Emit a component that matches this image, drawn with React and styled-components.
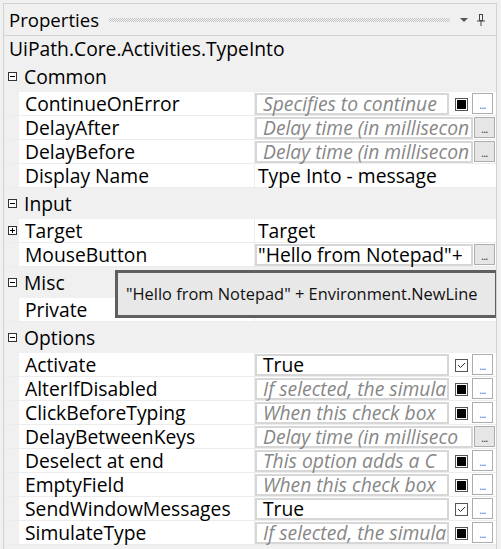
import styled, { createGlobalStyle } from "styled-components";

const GlobalStyle = createGlobalStyle`
  html, body {
    margin: 0;
    padding: 0;
    background: #f0f0f0;
  }
  body {
    font-family: "Open Sans", "Noto Sans", sans-serif;
    color: #000;
  }
`;

const groups = [
  {
    title: "Common",
    rows: [
      { name: "ContinueOnError", hint: "Specifies to continue", check: "on", btn: "blue" },
      { name: "DelayAfter", hint: "Delay time (in millisecon", btn: "gray" },
      { name: "DelayBefore", hint: "Delay time (in millisecon", btn: "gray" },
      { name: "Display Name", text: "Type Into - message" },
    ],
  },
  {
    title: "Input",
    rows: [
      { name: "Target", text: "Target", expand: true },
      { name: "MouseButton", value: '"Hello from Notepad"+', btn: "gray", tight: true },
    ],
  },
  {
    title: "Misc",
    rows: [{ name: "Private" }],
  },
  {
    title: "Options",
    rows: [
      { name: "Activate", value: "True", check: "tick", btn: "blue" },
      { name: "AlterIfDisabled", hint: "If selected, the simula", check: "on", btn: "blue" },
      { name: "ClickBeforeTyping", hint: "When this check box", check: "on", btn: "blue" },
      { name: "DelayBetweenKeys", hint: "Delay time (in milliseco", btn: "gray" },
      { name: "Deselect at end", hint: "This option adds a C", check: "on", btn: "blue" },
      { name: "EmptyField", hint: "When this check box", check: "on", btn: "blue" },
      { name: "SendWindowMessages", value: "True", check: "tick", btn: "blue" },
      { name: "SimulateType", hint: "If selected, the simula", check: "on", btn: "blue" },
    ],
  },
];

function Expander({ open }) {
  return (
    <svg width="9" height="9" viewBox="0 0 9 9">
      <rect x="0.5" y="0.5" width="8" height="8" fill="#fff" stroke="#333" />
      <line x1="2" y1="4.5" x2="7" y2="4.5" stroke="#000" />
      {!open && <line x1="4.5" y1="2" x2="4.5" y2="7" stroke="#000" />}
    </svg>
  );
}

function Row({ row }) {
  const hasCheck = !!row.check;
  return (
    <RowLine>
      <Gutter>{row.expand && <Expander open={false} />}</Gutter>
      <NameCell>{row.name}</NameCell>
      <ValueCell>
        {row.text && <PlainValue>{row.text}</PlainValue>}
        {(row.hint || row.value) && (
          <TextBox $wide={!hasCheck} $tight={row.tight}>
            {row.hint ? <Hint>{row.hint}</Hint> : row.value}
          </TextBox>
        )}
        {row.check === "on" && (
          <CheckBox>
            <Fill />
          </CheckBox>
        )}
        {row.check === "tick" && (
          <CheckBox>
            <svg width="9" height="7" viewBox="0 0 9 7">
              <polyline points="1,3 3.5,5.5 8,1" fill="none" stroke="#333" strokeWidth="1" />
            </svg>
          </CheckBox>
        )}
        {row.btn && (
          <DotsButton $gray={row.btn === "gray"} $afterCheck={hasCheck}>
            ...
          </DotsButton>
        )}
      </ValueCell>
    </RowLine>
  );
}

export default function App() {
  return (
    <>
      <GlobalStyle />
      <Panel>
        <TitleBar>
          <Title>Properties</Title>
          <Grip />
          <svg width="8" height="4" viewBox="0 0 8 4" style={{ marginRight: 9 }}>
            <polygon points="0,0 8,0 4,4" fill="#555" />
          </svg>
          <svg width="8" height="12" viewBox="0 0 8 12">
            <rect x="2.5" y="0.5" width="3" height="6" fill="none" stroke="#444" />
            <line x1="0" y1="7" x2="8" y2="7" stroke="#444" />
            <line x1="4" y1="7" x2="4" y2="12" stroke="#444" />
          </svg>
        </TitleBar>
        <TypeName>UiPath.Core.Activities.TypeInto</TypeName>
        {groups.map((g) => (
          <section key={g.title}>
            <GroupHeader>
              <Expander open />
              <GroupTitle>{g.title}</GroupTitle>
            </GroupHeader>
            {g.rows.map((r) => (
              <Row key={r.name} row={r} />
            ))}
          </section>
        ))}
        <Tooltip>"Hello from Notepad" + Environment.NewLine</Tooltip>
      </Panel>
    </>
  );
}

const Panel = styled.div`
  position: relative;
  margin: 3px 0 0 3px;
  width: 494px;
  height: 546px;
  box-sizing: border-box;
  border-left: 1px solid #d2d2d2;
  border-top: 1px solid #d2d2d2;
  border-right: 1px solid #d2d2d2;
  overflow: hidden;
  font-size: 19.3px;
  line-height: 22px;
`;

const TitleBar = styled.div`
  height: 31px;
  display: flex;
  align-items: center;
  padding: 0 11px 0 5px;
  border-bottom: 1px solid #d2d2d2;
`;

const Title = styled.div`
  font-size: 18.6px;
`;

const Grip = styled.div`
  flex: 1;
  height: 4px;
  margin: 0 10px 0 10px;
  background: repeating-conic-gradient(#c6c6c6 0 25%, transparent 0 50%) 0 0 / 2px 2px;
`;

const TypeName = styled.div`
  height: 25px;
  display: flex;
  align-items: center;
  padding-left: 5px;
`;

const GroupHeader = styled.div`
  height: 31px;
  display: flex;
  align-items: center;
  padding-left: 4px;
`;

const GroupTitle = styled.span`
  margin-left: 7px;
`;

const RowLine = styled.div`
  height: 24px;
  display: flex;
  box-sizing: border-box;
  border-bottom: 1px solid #ececec;
`;

const Gutter = styled.div`
  width: 15px;
  flex: none;
  display: flex;
  align-items: center;
  justify-content: flex-end;
  padding-right: 2px;
  box-sizing: border-box;
  background: #f0f0f0;
`;

const NameCell = styled.div`
  width: 236px;
  flex: none;
  box-sizing: border-box;
  padding-left: 6px;
  background: #fff;
  border-right: 1px solid #ececec;
  display: flex;
  align-items: center;
  white-space: nowrap;
`;

const ValueCell = styled.div`
  flex: 1;
  background: #fff;
  display: flex;
  align-items: flex-end;
  min-width: 0;
`;

const PlainValue = styled.div`
  align-self: center;
  padding-left: 3px;
  white-space: nowrap;
`;

const TextBox = styled.div`
  width: ${(p) => (p.$wide ? "218px" : "194px")};
  height: 22px;
  flex: none;
  box-sizing: border-box;
  border: 2px solid #d7d7d7;
  padding-left: ${(p) => (p.$tight ? "1px" : "6px")};
  line-height: 18px;
  overflow-x: clip;
  overflow-y: visible;
  white-space: nowrap;
`;

const Hint = styled.span`
  font-style: italic;
  color: #878787;
`;

const CheckBox = styled.div`
  width: 13px;
  height: 13px;
  flex: none;
  box-sizing: border-box;
  margin: 0 0 4px 6px;
  border: 1px solid #555;
  background: #fff;
  display: flex;
  align-items: center;
  justify-content: center;
`;

const Fill = styled.div`
  width: 9px;
  height: 9px;
  background: #000;
`;

const DotsButton = styled.div`
  width: 21px;
  height: 21px;
  flex: none;
  box-sizing: border-box;
  margin: 0 0 1px ${(p) => (p.$afterCheck ? "4px" : "1px")};
  border: 1px solid #adadad;
  background: ${(p) => (p.$gray ? "#e6e6e6" : "#fff")};
  color: ${(p) => (p.$gray ? "#222" : "#1c64c8")};
  font-size: 10px;
  line-height: 1;
  display: flex;
  align-items: flex-end;
  justify-content: center;
  padding-bottom: 3px;
  letter-spacing: -0.5px;
`;

const Tooltip = styled.div`
  position: absolute;
  left: 111px;
  top: 266px;
  width: 383px;
  height: 48px;
  box-sizing: border-box;
  border: 3px solid #5f5f5f;
  background: #e8e8e8;
  display: flex;
  align-items: center;
  padding-left: 8px;
  font-size: 16.4px;
  line-height: 20px;
  color: #111;
  white-space: nowrap;
`;
